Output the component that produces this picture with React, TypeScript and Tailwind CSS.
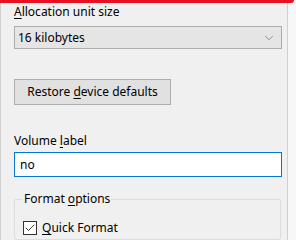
import { ChevronDown, Check } from 'lucide-react';

export default function App() {
  return (
    <div className="relative flex h-[240px] w-[296px] overflow-hidden bg-[#f7f7f7] text-[12px] leading-[16px] text-black [font-family:'Noto_Sans',sans-serif]">
      {/* highlight annotation */}
      <div className="absolute left-0 top-0 h-[3px] w-[294px] rounded-br-[3px] bg-[#e81123]" />

      <div className="flex h-full w-[288px] flex-col border-x border-[#cfcfcf] bg-[#f0f0f0] pl-[13px] pr-[5px] pt-[4px]">
        <div>
          <span className="underline underline-offset-2">A</span>llocation unit size
        </div>

        <div className="mt-[6px] flex h-[23px] w-[268px] items-center justify-between border border-[#adadad] bg-[#e5e5e5] pl-[3px] pr-[4px]">
          <span>16 kilobytes</span>
          <ChevronDown className="h-[14px] w-[16px] text-[#606060]" strokeWidth={1.1} />
        </div>

        <button className="mt-[30px] h-[26px] w-[157px] border border-[#adadad] bg-[#e1e1e1] text-center">
          <span>
            Restore <span className="underline underline-offset-2">d</span>evice defaults
          </span>
        </button>

        <div className="mt-[28px]">
          Volume <span className="underline underline-offset-2">l</span>abel
        </div>

        <div className="mt-[3px] flex h-[25px] w-[268px] items-center border border-[#0078d7] bg-white pl-[5px]">
          no
        </div>

        <fieldset className="mt-[14px] w-[267px] flex-1 rounded-[2px] border border-[#dcdcdc] px-[8px] pt-[13px]">
          <legend className="px-[1px]">
            Format <span className="underline underline-offset-2">o</span>ptions
          </legend>
          <div className="flex items-center gap-[5px]">
            <div className="flex h-[14px] w-[14px] items-center justify-center border border-[#333] bg-white">
              <Check className="h-[12px] w-[12px]" strokeWidth={1.5} />
            </div>
            <span>
              <span className="underline underline-offset-2">Q</span>uick Format
            </span>
          </div>
        </fieldset>
      </div>
    </div>
  );
}
